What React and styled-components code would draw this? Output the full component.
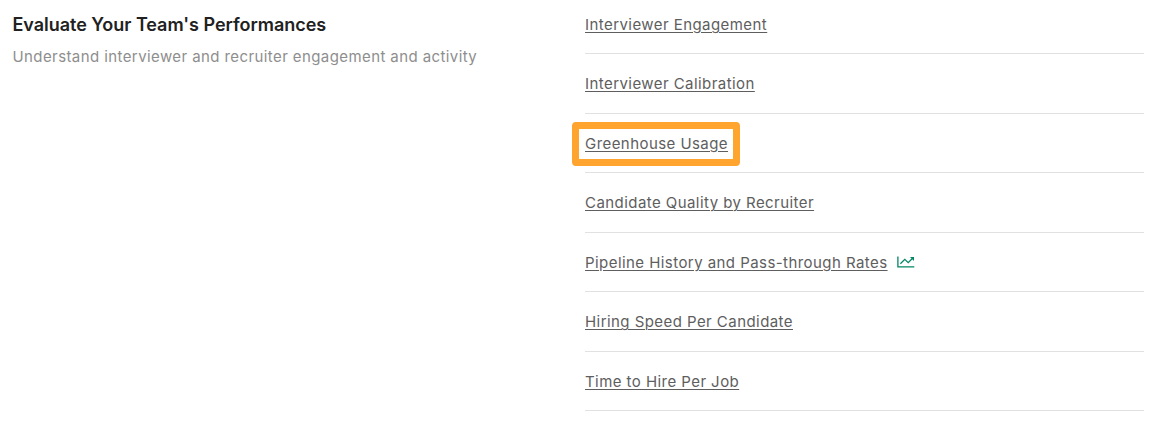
import styled, { createGlobalStyle } from "styled-components";

const reports = [
  { title: "Interviewer Engagement" },
  { title: "Interviewer Calibration" },
  { title: "Greenhouse Usage", highlighted: true },
  { title: "Candidate Quality by Recruiter" },
  { title: "Pipeline History and Pass-through Rates", hasChart: true },
  { title: "Hiring Speed Per Candidate" },
  { title: "Time to Hire Per Job" },
];

const ChartIcon = () => (
  <SC.Icon viewBox="0 0 18 12" aria-hidden="true">
    <path d="M0.9 0.5V10.9H17.3" />
    <path d="M3.4 7.8L7.8 3.4L11.2 6.6L15.6 2.3" />
    <path d="M13 1H17V5Z" fill="#038764" stroke="none" />
  </SC.Icon>
);

const ReportItem = ({ title, highlighted, hasChart }) => (
  <SC.Item>
    <SC.LinkWrap>
      <SC.Link href="#">{title}</SC.Link>
      {highlighted && <SC.Highlight />}
    </SC.LinkWrap>
    {hasChart && <ChartIcon />}
  </SC.Item>
);

export default function App() {
  return (
    <>
      <GlobalStyle />
      <SC.Section>
        <SC.Intro>
          <SC.Title>Evaluate Your Team's Performances</SC.Title>
          <SC.Description>
            Understand interviewer and recruiter engagement and activity
          </SC.Description>
        </SC.Intro>
        <SC.List>
          {reports.map((report) => (
            <ReportItem key={report.title} {...report} />
          ))}
        </SC.List>
      </SC.Section>
    </>
  );
}

const GlobalStyle = createGlobalStyle`
  * {
    box-sizing: border-box;
  }

  body {
    margin: 0;
    background: #fff;
    font-family: Inter, "Liberation Sans", sans-serif;
    -webkit-font-smoothing: antialiased;
  }
`;

const SC = {
  Section: styled.section`
    display: grid;
    grid-template-columns: 572.5px 559px;
    padding-left: 12.5px;
    height: 426px;
    overflow: hidden;
  `,
  Intro: styled.div`
    padding-top: 13px;
  `,
  Title: styled.h2`
    margin: 0;
    font-size: 18px;
    font-weight: 600;
    line-height: 24px;
    letter-spacing: -0.03px;
    color: #212121;
  `,
  Description: styled.p`
    margin: 8px 0 0;
    font-size: 15px;
    line-height: 24px;
    letter-spacing: 0.41px;
    color: #8e8e8e;
  `,
  List: styled.ul`
    margin: -5.5px 0 0;
    padding: 0;
    list-style: none;
  `,
  Item: styled.li`
    display: flex;
    align-items: center;
    height: 59.5px;
    padding-top: 1px;
    border-bottom: 1px solid #e1e1e1;
  `,
  LinkWrap: styled.div`
    position: relative;
    line-height: 24px;
  `,
  Link: styled.a`
    font-size: 15px;
    letter-spacing: 0.44px;
    color: #5e5e5e;
    text-decoration: underline;
    text-decoration-thickness: 1px;
    text-underline-offset: 2px;
    text-decoration-skip-ink: auto;
    white-space: nowrap;
  `,
  Highlight: styled.span`
    position: absolute;
    inset: -9.25px -12px -10.25px -13px;
    border: 7px solid #ffa42e;
    border-radius: 4px;
    pointer-events: none;
  `,
  Icon: styled.svg`
    width: 18px;
    height: 12px;
    margin-left: 9px;
    fill: none;
    stroke: #038764;
    stroke-width: 1.3;
  `,
};
